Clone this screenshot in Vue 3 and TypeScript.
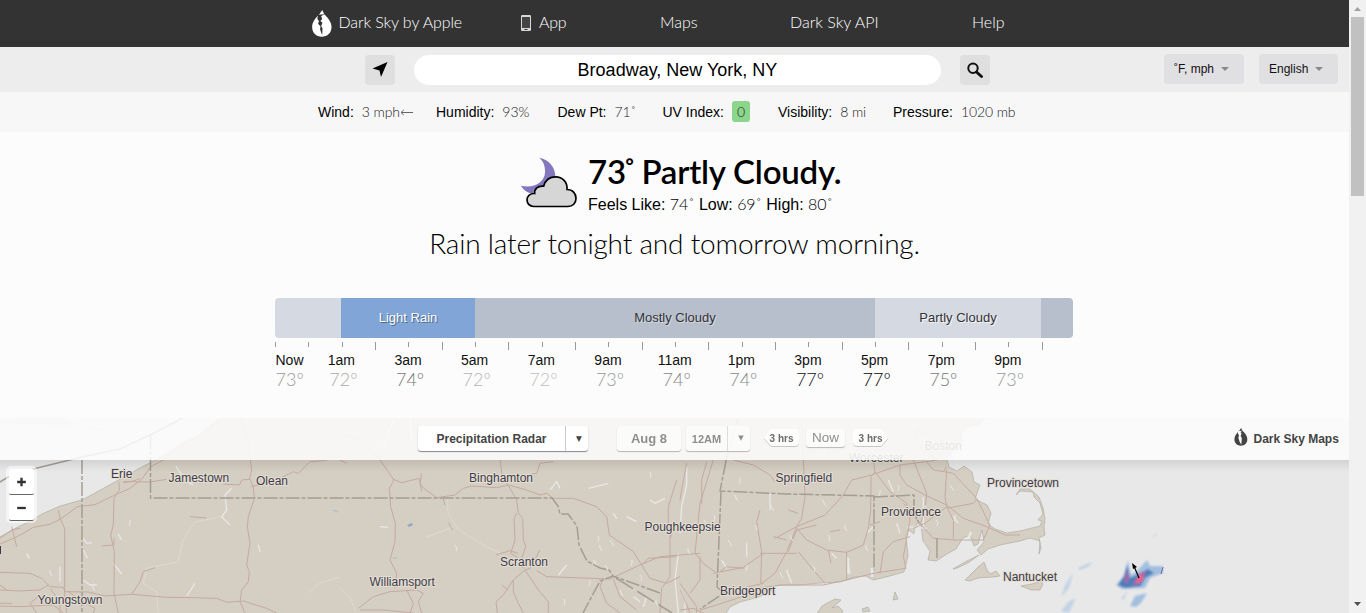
<script setup lang="ts">
interface Stat { label: string; value: string; kind?: string }
const stats: Stat[] = [
  { label: 'Wind:', value: '3 mph', kind: 'wind' },
  { label: 'Humidity:', value: '93%' },
  { label: 'Dew Pt:', value: '71˚' },
  { label: 'UV Index:', value: '0', kind: 'uv' },
  { label: 'Visibility:', value: '8 mi' },
  { label: 'Pressure:', value: '1020 mb' },
]
const hours = [
  { t: 'Now', d: '73º', c: '#999' }, { t: '1am', d: '72º', c: '#aaa' },
  { t: '3am', d: '74º', c: '#777' }, { t: '5am', d: '72º', c: '#b4b4b4' },
  { t: '7am', d: '72º', c: '#c0c0c0' }, { t: '9am', d: '73º', c: '#999' },
  { t: '11am', d: '74º', c: '#888' }, { t: '1pm', d: '74º', c: '#888' },
  { t: '3pm', d: '77º', c: '#111' }, { t: '5pm', d: '77º', c: '#000' },
  { t: '7pm', d: '75º', c: '#777' }, { t: '9pm', d: '73º', c: '#999' },
]
const ticks = Array.from({ length: 24 }, (_, i) => i % 2 === 1 && i > 1)
const cities: [string, number, number][] = [
  ['Erie', 111, 478], ['Jamestown', 168.5, 482], ['Olean', 256, 485],
  ['Youngstown', 37.5, 604], ['Binghamton', 469, 482], ['Scranton', 500, 566],
  ['Williamsport', 369.5, 586], ['Poughkeepsie', 644.5, 531], ['Springfield', 775.5, 482],
  ['Worcester', 849, 462], ['Boston', 924.5, 450], ['Providence', 881, 516],
  ['Bridgeport', 720, 595], ['Provincetown', 987, 487], ['Nantucket', 1003, 581],
]
// Road geometry, three units per pixel, one group per map tile
const tiles: { x: number; roads: string[]; water: string[] }[] = [
  {
    x: 0,
    roads: [
      'M0 402L40 385L70 370L100 352L150 343L185 325L232 290L285 284L345 255L390 235L425 208L452 170L490 150L530 115L600 75L665 28',
      'M0 385L35 360L60 355M35 350L50 410M175 300L180 325L194 355V555L200 609',
      'M357 215L358 240L342 265L340 345L332 375L343 425L342 550L355 609M342 385V405L305 408',
      'M370 215L450 216L500 208M420 205L405 212L370 218',
      'M0 487L90 490L125 505L150 530L190 532L195 545L265 546L315 558L395 553L500 562L580 563L650 565L680 577L730 573L800 595L830 609',
      'M0 540L60 543L120 540L145 525M0 525L20 540M0 588L60 590L160 585L190 609',
      'M120 555L90 580L110 609M150 535L180 575L180 609M205 545L240 570L285 595L280 609',
      'M395 553L420 515L430 485L465 473M670 222L718 225L725 210L750 208L760 230L763 265L745 320L742 350L750 400L740 465L748 485L745 515L725 540L720 575L735 609',
      'M750 145L755 180L748 208M752 230L820 215L880 185L895 190L930 155L970 152L1020 140',
      'M570 320L620 324M0 580H35M720 28L745 80V145',
    ],
    water: [
      'M527 168L545 195L560 215L580 225', 'M695 235L675 255L680 300L665 320L690 345',
      'M250 385L260 400L275 398M250 420L262 445M250 510L270 525H290', 'M180 470V515',
      'M340 460L365 492M80 430L88 445M355 372L365 390M775 405L780 425',
      'M585 520L560 558M500 0L550 25',
    ],
  },
  {
    x: 340,
    roads: [
      'M0 65L60 95L120 150L145 185L162 210L148 235L152 290L166 340L165 395L150 450L170 490L165 535',
      'M160 208L185 218L237 205L245 230L290 263L345 255L370 235L395 228L470 233L505 225L560 240L600 255L620 250L640 265L700 265L770 290L800 320L808 375L880 425L905 465L930 505L980 520L1020 500',
      'M480 150L487 200L510 235L530 270L535 310L548 325L550 390L557 410L540 460L550 475',
      'M530 310L522 325L525 390L512 430L530 440L545 470',
      'M640 155L600 160L590 190L575 192M245 190L240 220L245 245M310 265L315 285',
      'M468 435L510 422L535 430M600 420L570 475L555 480L520 510L490 555L468 575L472 609',
      'M555 480L595 540L625 575V609M590 482L620 500L810 507L900 465L960 440L1020 435',
      'M520 510V545L535 580L550 609M485 525L505 540M55 595L100 560L150 545L230 540L250 550L235 575L245 609',
      'M60 600L130 600L220 609M200 540L220 580L210 609M995 380L985 340V290L1010 210M905 465L925 445L1010 440M990 360V500L965 535L960 609',
      'M790 505L780 530L800 580L840 609M820 507L840 560L890 600M0 150L20 160M325 338L338 360',
    ],
    water: [
      'M630 240L650 215L660 235M745 235L805 220',
      'M930 270L945 280L975 265', 'M1015 430L1005 510L1015 609', 'M655 495L680 465M860 320L890 335',
      'M210 20L215 90M160 30L130 110M820 310L830 325M760 450L770 465',
      'M120 350L145 352', 'M920 560L910 590M880 560L900 575',
    ],
  },
  {
    x: 680,
    roads: [
      'M100 150L60 280L45 430L75 465L105 485M0 435L60 430M20 160L5 240L0 270',
      'M80 155L65 210V280M160 150L220 165L270 195L285 215',
      'M365 28L370 150L375 260L365 325L350 350L320 425L285 490L245 520M350 350L435 315L490 255L515 210L575 195L660 165L740 155L770 150',
      'M325 425L350 360L410 345M350 350L285 385M350 355L380 390L440 420L500 427L550 405L565 355L572 300L573 200L585 185L580 150',
      'M585 185L630 245L680 280L690 330L680 385L670 440L678 475L580 490L500 510L430 525L300 525L235 535L185 560L110 585L60 600',
      'M355 425L400 480L435 520M240 300L230 335L245 425L242 520M240 430L350 430M190 472L250 430M100 490L190 472M120 485L140 470L190 475',
      'M660 165L660 195L680 225L735 255L800 285L850 325L920 350L975 375H1020M740 155L760 180L790 185L800 170M800 180L795 260L800 290L735 340L700 355',
      'M670 280L690 300L710 330L760 385L825 390L910 390L930 345L890 265L820 190L790 185M720 345L735 300L740 250L700 150',
      'M800 290L820 330V385M800 295L880 280L890 270M600 490L610 425L640 395L690 380',
      'M445 420L453 460M500 425V510M0 600L40 595L70 609M30 609L10 560L0 540M60 440V510L30 550M0 520L50 590L50 609',
      'M280 380L320 390M325 300L355 310M570 345L600 335M450 365L480 360M185 560V535L250 520',
      'M680 45L730 70L790 95L820 150M730 28L700 90L740 130L770 150',
    ],
    water: [
      'M0 370L5 290L20 225V170', 'M0 540L15 570V609', 'M270 250V300M125 450L140 475M320 480L335 520M580 350L560 370M625 210L640 245',
      'M430 110L440 140M455 430L470 445M500 440L510 490', 'M730 260V350M680 350L740 355', 'M200 400V440M650 340L660 370M820 320L835 340',
    ],
  },
]
const streams = ['M220 517L195 522L183 540L178 562L147 568L143 583L157 592L158 613', 'M308 593L320 583L340 577', 'M447 498L448 513L457 528L470 537L487 547L500 553', 'M340 588L350 597L355 610', 'M427 537L453 527']
const ponds = [[130, 520], [92, 585], [455, 545], [50, 570], [598, 536], [605, 565], [590, 580], [620, 590], [640, 575], [656, 600], [714, 515], [728, 540], [747, 565], [790, 535], [828, 535], [866, 545], [807, 480], [822, 500], [880, 490], [925, 505], [936, 520], [600, 545], [564, 599], [704, 520], [740, 478], [771, 505], [813, 566], [688, 548], [650, 472], [610, 540], [632, 560], [735, 495], [755, 525], [845, 525], [898, 485], [950, 485], [955, 515], [780, 572]]
</script>

<template>
  <div class="page">
    <main class="content">
      <nav class="nav">
        <a class="brand">
          <svg class="drop" viewBox="39 31 57 78"><path fill="#fff" d="M68 31L74 43C86 55 95 66 95 80C95 97 83 108 67 108C51 108 39 97 39 80C39 66 48 54 60 43Z" /><path fill="#333" d="M56 45L76 43L65 48L68 57L63 63L69 68L65 77L69 84L68 104L62 87L63 78L56 71L59 63L54 57Z" /></svg>
          <span>Dark Sky by Apple</span>
        </a>
        <a class="app">
          <svg viewBox="0 0 10 16"><rect width="10" height="16" rx="1.2" fill="#d8d8d8" /><rect x="1" y="2" width="8" height="11" fill="#444" /><rect x="3.5" y="14" width="3" height="1" fill="#333" /></svg>
          <span>App</span>
        </a>
        <a>Maps</a><a>Dark Sky API</a><a>Help</a>
      </nav>

      <div class="search">
        <button class="square"><svg viewBox="0 0 30 30"><path d="M22.5 7L16 22L14.5 15.5L7.5 13.5Z" /></svg></button>
        <div class="field">Broadway, New York, NY</div>
        <button class="square"><svg viewBox="0 0 30 30"><circle cx="13" cy="13.2" r="4.7" fill="none" stroke="#111" stroke-width="2" /><path d="M16.5 17L21.5 21.5" stroke="#111" stroke-width="3" stroke-linecap="round" /></svg></button>
        <div class="select units"><span>˚F, mph</span><i /></div>
        <div class="select lang"><span>English</span><i /></div>
      </div>

      <div class="stats">
        <div v-for="s in stats" :key="s.label">
          <span>{{ s.label }}</span><b :class="s.kind">{{ s.value }}</b>
          <svg v-if="s.kind === 'wind'" class="arrow" viewBox="0 0 13 7"><path d="M1 3.5H13M3.8 1L1 3.5L3.8 6" fill="none" stroke="#666" /></svg>
        </div>
      </div>

      <section class="current">
        <svg class="weather" viewBox="303 53 168 150">
          <path fill="#8477bd" d="M358 54C388 60 407 84 406 113C404 148 357 173 325 158C315 154 307 146 303 138C342 147 374 127 375 98C376 79 370 65 358 54Z" />
          <path fill="#d6d6d6" stroke="#000" stroke-width="5" d="M341 200C328 200 321 190 321 180C321 169 331 160 344 161C343 147 353 137 371 139C376 120 390 111 407 111C427 111 443 127 441 149C458 149 468 161 468 176C468 190 458 200 444 200Z" />
        </svg>
        <div>
          <h1>73<span class="degree">˚</span> Partly Cloudy.</h1>
          <p>Feels Like: <b>74˚</b> Low: <b>69˚</b> High: <b>80˚</b></p>
        </div>
      </section>
      <h2>Rain later tonight and tomorrow morning.</h2>

      <section class="timeline">
        <div class="bar">
          <span class="partly" /><span class="rain">Light Rain</span><span class="mostly">Mostly Cloudy</span>
          <span class="partly">Partly Cloudy</span><span class="mostly" />
        </div>
        <div class="ticks"><i v-for="(long, i) in ticks" :key="i" :class="{ long }" /></div>
        <div class="hours">
          <div v-for="h in hours" :key="h.t"><span>{{ h.t }}</span><em :style="{ color: h.c }">{{ h.d }}</em></div>
        </div>
      </section>

      <section class="map">
        <svg class="terrain" viewBox="0 418 1349 195">
          <defs><filter id="soft" x="-30%" y="-30%" width="160%" height="160%"><feGaussianBlur stdDeviation="1.1" /></filter></defs>
          <rect y="418" width="1349" height="195" fill="#e8e8e8" />
          <g fill="#d5cec2" stroke="#aaa69b" stroke-width=".6">
            <path d="M-2 538L18 527L32 520L42 514L60 506L82 500L115 482L140 468L163 456L182 443L198 436L212 424L222 416H987L980 424L967 427L960 435L963 441L954 447L947 459L949 467L957 471L964 466L972 472L974 482L980 485L975 499L987 505L991 513L988 524L995 529L1007 533L1020 531L1040 526L1042 521L1038 520L1043 514L1040 503L1034 497L1033 492L1020 491L1016 495L1020 489L1030 489L1039 497L1043 508L1045 519L1044 527L1045 535L1039 538L1041 548L1039 554L1040 541L1030 538L1020 541L1000 545L988 549L981 555L977 550L984 542L982 530L978 544L974 546L970 535L963 538L956 549L947 554L936 561L928 560L930 551L923 541L921 525L917 523L914 534L909 530L906 535L908 556L904 572L886 577L873 580L866 576L854 577L840 582L820 583L800 585L784 585L774 586L770 593L755 598L740 602L730 607L724 616H-2Z" />
            <path d="M816 615L822 606L835 599L841 600L832 608L838 606L843 611L840 615ZM965 580L971 574L977 568L984 562L987 570L990 574L996 571L1000 576L993 577L978 578L970 581ZM1021 586L1032 584L1041 581L1043 584L1040 590L1031 590ZM953 569L965 562L979 555L968 563L957 568ZM893 600L895 592L898 599ZM862 609L868 607L870 611L863 612Z" />
          </g>
          <path d="M0 418H62L80 426L120 431L95 430L82 425L50 425L0 423Z" fill="#d5cec2" opacity=".4" />
          <g fill="none" stroke="#e8e8e8">
            <path d="M917 526L914 545L920 560M923 543L925 559M909 532L911 550M971 532L965 547M848 558L848 574M872 568V577" stroke-width="2.5" />
            <path v-for="s in streams" :key="s" :d="s" stroke="#dfdcd4" stroke-width=".8" />
            <g v-for="t in tiles" :key="t.x" :transform="`translate(${t.x} 410) scale(.33333)`">
              <path v-for="p in t.water" :key="p" :d="p" stroke-width="4" stroke-linejoin="round" />
              <path v-for="p in t.roads" :key="p" :d="p" stroke="#c5aaa0" stroke-width="3" stroke-linejoin="round" />
            </g>
            <path v-for="(w, i) in ponds" :key="i" :d="`M${w[0]} ${w[1]}l${i % 3} 3l${i % 2 ? 2 : -1} 3`" />
          </g>
          <g fill="none" stroke="#a29e94" stroke-width="1.5">
            <path d="M0 482L8 477L37 468L82 457L120 449L150 435L183 418" />
            <path d="M82 460V613M150.500 435V498H552L558 506L560 514H568L577 526L579 545L587 561L600 568L609 570L613 576M660 593L613 576L600 581L592 596L583 613M726 461L720 491L786 494L874 496V570M874 497L914 495V512L919 523M721 492L717 587L724 593L700 609" stroke-dasharray="14 2 4 2" />
            <path d="M616 578L672 613" stroke-dasharray="20 5" /><path d="M738 418L726 461M937 538V558" />
          </g>
          <path d="M407 525l5 -2l1 2l-4 2z" fill="#8eabc0" /><path d="M333 510l5 2M393 558h4M283 420l2 1" stroke="#b4c3cc" stroke-width="1.5" />
          <g filter="url(#soft)">
            <path fill="#c2d3e5" d="M1061 597L1065 585L1073 573L1069 588ZM1078 568L1086 564L1093 562L1088 567L1080 570ZM1061 611L1068 602L1076 598L1069 613ZM1153 537L1157 532L1155 537ZM1121 599L1127 591L1124 600Z" />
            <path fill="#a3bfdf" d="M1116 585L1124 576L1128 560L1131 575L1137 571L1147 560L1150 566L1163 566L1163 573L1150 578L1145 588L1122 589ZM1130 606L1135 596L1147 593L1141 603L1136 607Z" />
            <path fill="#4e7eb9" d="M1118 585L1124 576L1127 565L1130 578L1139 574L1148 569L1154 573L1145 578L1141 586L1125 588Z" />
            <path fill="#a965a6" d="M1124 581L1127 570L1129 577L1127 584ZM1132 586L1140 573L1146 571L1142 582Z" /><path fill="#ef638e" d="M1135 583L1140 574L1144 576L1140 583Z" />
          </g>
          <path d="M1163 567L1161 574" stroke="#795fa0" /><path d="M1139 578L1133.500 565" stroke="#000" stroke-width="1.2" /><path d="M1132 563L1137 567L1133 569Z" />
          <path d="M.5 546V554" stroke="#3c3a4c" />
          <g class="cities"><text v-for="c in cities" :key="c[0]" :x="c[1]" :y="c[2]">{{ c[0] }}</text></g>
        </svg>

        <div class="toolbar">
          <div class="tool radar-mode"><span>Precipitation Radar</span><i>▼</i></div>
          <div class="tool day">Aug 8</div>
          <div class="tool hour"><span>12AM</span><i>▼</i></div>
          <div class="step"><svg viewBox="0 0 37 20"><path d="M1 10L6.500 2.500Q7.500 1 10 1H32Q36 1 36 5V14Q36 18 32 18H10Q7.500 18 6.500 16.500Z" /></svg><span>3 hrs</span></div>
          <div class="tool now">Now</div>
          <div class="step next"><svg viewBox="0 0 37 20"><path d="M36 10L30.500 2.500Q29.500 1 27 1H5Q1 1 1 5V14Q1 18 5 18H27Q29.500 18 30.500 16.500Z" /></svg><span>3 hrs</span></div>
          <div class="credit">
            <svg viewBox="39 31 57 78"><path fill="#444" d="M68 31L74 43C86 55 95 66 95 80C95 97 83 108 67 108C51 108 39 97 39 80C39 66 48 54 60 43Z" /><path fill="#fcfcfc" d="M56 44L74 43L65 48L70 54L66 66L71 74L69 104L62 92L56 74L59 64L54 55Z" /></svg>
            <span>Dark Sky Maps</span>
          </div>
        </div>
        <div class="zoom">
          <button aria-label="+"><svg viewBox="0 0 25 26"><path d="M8 13.500H17M12.500 9V18" /></svg></button>
          <button aria-label="−"><svg viewBox="0 0 25 26"><path d="M8 13.500H17" /></svg></button>
        </div>
      </section>
    </main>
    <aside class="scroll"><svg viewBox="0 0 17 17"><path d="M5 11H12L8.500 7Z" fill="#a0a0a0" /></svg><div /><svg viewBox="0 0 17 17"><path d="M5 6H12L8.500 10Z" fill="#505050" /></svg></aside>
  </div>
</template>

<style>
body { margin: 0; overflow: hidden; }
</style>
<style scoped>
* { box-sizing: border-box; }
.page { display: flex; width: 1366px; height: 613px; overflow: hidden; background: #fcfcfc; font-family: "Liberation Sans", Arial, sans-serif; color: #000; }
.content { width: 1349px; white-space: nowrap; }
button { border: 0; padding: 0; font: inherit; }
svg { display: block; }
.nav { height: 47px; background: #333; color: #fff; display: grid; grid-template-columns: 208px 140px 130px 182px 60px; padding-left: 312px; align-items: center; font: 300 16px/43px Lato, sans-serif; padding-bottom: 4px; }
.brand, .app { display: flex; align-items: center; gap: 7px; }
.brand span { letter-spacing: -.1px; margin-left: -.5px; }
.app { gap: 9px; padding-left: 1px; }
.app span { margin-left: -1px; letter-spacing: -.2px; }
.app svg { width: 10px; height: 16px; margin-top: 2px; }
.drop { width: 20px; height: 27px; margin-top: 4px; }
.search { height: 45px; background: #ededed; display: flex; padding: 8px 0 0 365px; }
.square { width: 30px; height: 30px; background: #dfdfdf; border-radius: 4px; }
.field { width: 527px; height: 30px; margin: 0 19px; border-radius: 15px; background: #fff; text-align: center; font-size: 18px; line-height: 30px; }
.select { height: 30px; margin-top: -1px; border-radius: 4px; background: #e0e0e2; color: #111; display: flex; align-items: center; font-size: 12px; padding-left: 10px; gap: 7px; }
.units { width: 80px; margin-left: 174px; }
.lang { width: 79px; margin-left: 15px; }
.select i { border: 4px solid transparent; border-top-color: #888; border-bottom: 0; }
.stats { height: 40px; background: #f7f7f7; padding-left: 318px; display: grid; grid-template-columns: 118px 121.5px 105px 115.5px 115px 130px; font-size: 14px; line-height: 40px; }
.stats > div { display: flex; align-items: center; }
.stats b { font: 300 14px/20px Lato, sans-serif; margin-left: 8px; color: #222; letter-spacing: -.1px; }
.stats .uv { background: #8bd68b; border-radius: 3px; padding: 0 5px; height: 21px; line-height: 22px; margin-top: -1px; width: 18px; }
.arrow { width: 13px; height: 7px; margin-left: 0; }
.current { height: 94px; padding: 25px 0 0 521px; display: flex; }
.weather { width: 56px; height: 51px; margin-right: 11px; }
h1 { font: 600 33px/32px Lato, sans-serif; margin: -2px 0 0; letter-spacing: -.2px; }
.degree { margin: 0 -2.5px 0 -3px; }
.current p { margin: 7px 0 0; font-size: 16px; line-height: 20px; }
.current b { font-family: Lato, sans-serif; font-weight: 300; letter-spacing: -.1px; }
h2 { margin: -1px 0 0; height: 73px; font: 300 28px/36px Lato, sans-serif; letter-spacing: -.18px; text-align: center; }
.timeline { margin-left: 275px; width: 800px; height: 120px; }
.bar { width: 798px; height: 40px; border-radius: 4px; overflow: hidden; display: grid; grid-template-columns: 66px 134px 400px 166px 32px; text-align: center; font-size: 13px; line-height: 39px; color: #333; }
.partly { background: #d5dae2; text-shadow: 1px 1px 0 #f4f5f8; }
.mostly { background: #b7becc; text-shadow: 1px 1px 0 #d4d9e2; }
.rain { background: #80a5d6; color: #fff; text-shadow: 1px 1px 0 #4c6888; }
.ticks { margin-top: 4px; height: 10px; display: grid; grid-template-columns: repeat(24, 33.33px); }
.ticks i { width: 1px; height: 5px; background: #999; }
.ticks .long { height: 8px; }
.hours { display: grid; grid-template-columns: repeat(12, 66.67px); }
.hours div { width: 66px; margin-left: -33.3px; text-align: center; font-size: 14px; line-height: 17px; color: #111; }
.hours div:first-child { margin-left: 0; text-align: left; padding-left: .5px; }
.hours span, .hours em { display: block; }
.hours em { font: 300 18px/21px Lato, sans-serif; padding-left: 4px; }
.hours div:first-child em { padding-left: 0; }
.map { position: relative; height: 195px; overflow: hidden; }
.terrain { width: 1349px; height: 195px; }
.cities { fill: #3c3a4c; font-size: 12px; paint-order: stroke; stroke: #e5dfd2; stroke-width: 2px; stroke-linejoin: round; }
.toolbar { position: absolute; inset: 0 0 auto; height: 42px; background: rgba(252, 252, 252, .88); display: flex; padding: 8px 0 0 418px; color: #444; font-weight: 700; }
.toolbar::after { content: ""; position: absolute; left: 0; right: 0; top: 42px; height: 12px; background: linear-gradient(rgba(0, 0, 0, .09), transparent); }
.tool { height: 25px; background: #fff; border-radius: 3px; box-shadow: 0 1px 1px #888; display: flex; font-size: 12px; line-height: 26px; }
.tool i { font: 7px/25px "DejaVu Sans", sans-serif; border-left: 1px solid #ccc; text-align: center; padding-left: 4px; }
.radar-mode { width: 170px; }
.radar-mode span { width: 147px; text-align: center; }
.radar-mode i { width: 23px; font-size: 7.5px; }
.day, .hour, .now, .step { opacity: .58; }
.day { width: 64px; margin-left: 29px; justify-content: center; font-size: 13px; }
.hour { width: 64px; margin-left: 5px; font-size: 11px; }
.hour span { width: 41px; text-align: center; }
.hour i { width: 23px; }
.step { width: 37px; height: 20px; margin: 2px 0 0 13px; position: relative; font-size: 10px; line-height: 21px; text-align: center; opacity: .78; }
.step svg { position: absolute; width: 37px; height: 20px; fill: #fff; filter: drop-shadow(0 1px 0 #bbb); }
.step span { position: relative; }
.now { width: 39px; height: 18px; margin: 3px 0 0 6px; justify-content: center; font-weight: 400; font-size: 13.5px; line-height: 17px; }
.next { margin-left: 7px; }
.credit { display: flex; margin-left: 345px; gap: 5.5px; font-size: 12px; line-height: 26px; }
.credit svg { width: 14px; height: 18px; margin-top: 2px; }
.zoom { position: absolute; left: 6px; top: 48px; width: 31px; height: 57px; border-radius: 5px; background: rgba(255, 255, 255, .55); padding: 3px; }
.zoom button { display: block; width: 25px; height: 26px; background: #fff; border-bottom: 1px solid #666; border-radius: 2px; }
.zoom svg { width: 25px; height: 25px; fill: none; stroke: #333; stroke-width: 2.4; }
.scroll { width: 17px; height: 613px; background: #f1f1f1; display: flex; flex-direction: column; }
.scroll svg { width: 17px; height: 17px; }
.scroll div { width: 13px; height: 179px; margin: 0 2px auto; background: #c1c1c1; }
</style>
